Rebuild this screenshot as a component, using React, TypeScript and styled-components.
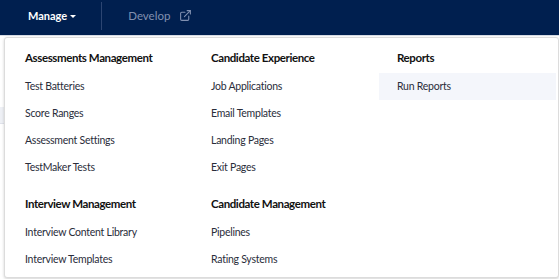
import React from "react";
import styled, { createGlobalStyle } from "styled-components";
import { ExternalLink } from "lucide-react";

const GlobalStyle = createGlobalStyle`
  html, body {
    margin: 0;
    padding: 0;
    background: #ffffff;
    font-family: Lato, "Open Sans", Arial, sans-serif;
  }
`;

const Page = styled.div`
  position: relative;
  width: 559px;
  height: 279px;
  overflow: hidden;
  background: #ffffff;
`;

const NavBar = styled.nav`
  display: flex;
  align-items: center;
  height: 35px;
  padding-left: 28px;
  background: #001f4f;
  border-bottom: 1px solid #d6dbe4;
`;

const NavLink = styled.div<{ active?: boolean }>`
  display: flex;
  align-items: center;
  gap: ${({ active }) => (active ? "3px" : "9px")};
  height: 31px;
  margin-bottom: 4px;
  font-size: ${({ active }) => (active ? "11px" : "11.5px")};
  font-weight: ${({ active }) => (active ? 700 : 400)};
  color: ${({ active }) => (active ? "#ffffff" : "#8090b0")};
`;

const Caret = styled.span`
  width: 0;
  height: 0;
  border-left: 3px solid transparent;
  border-right: 3px solid transparent;
  border-top: 3px solid #ffffff;
  margin-top: 1px;
`;

const Divider = styled.div`
  width: 1px;
  height: 28px;
  margin: 2px 26px 0 25px;
  align-self: flex-start;
  background: #2c4572;
`;

const Content = styled.div`
  padding-top: 71px;
`;

const TableHeader = styled.div`
  height: 16px;
  background: #eef0f5;
  border-bottom: 1px solid #dfe2ea;
`;

const Dropdown = styled.div`
  position: absolute;
  top: 37px;
  left: 4px;
  width: 549px;
  height: 233px;
  padding: 1px 2px 5px;
  display: grid;
  grid-template-columns: 186px 186px 1fr;
  background: #ffffff;
  border: 1px solid #dcdcdc;
  border-radius: 3px;
  box-shadow: 0 1px 3px rgba(0, 0, 0, 0.18);
`;

const Column = styled.div`
  display: flex;
  flex-direction: column;
  gap: 4px;
`;

const Section = styled.div`
  display: flex;
  flex-direction: column;
`;

const Heading = styled.div`
  height: 20px;
  line-height: 20px;
  margin: 9px 0 5px;
  padding: 0 18px;
  font-size: 11.5px;
  font-weight: 700;
  letter-spacing: -0.4px;
  color: #111111;
`;

const Item = styled.div<{ hovered?: boolean }>`
  height: 27px;
  line-height: 27px;
  padding: 0 18px;
  font-size: 10.5px;
  letter-spacing: -0.25px;
  color: #2a2d3a;
  background: ${({ hovered }) => (hovered ? "#f4f6fb" : "transparent")};
`;

const menu = [
  [
    {
      title: "Assessments Management",
      items: ["Test Batteries", "Score Ranges", "Assessment Settings", "TestMaker Tests"],
    },
    {
      title: "Interview Management",
      items: ["Interview Content Library", "Interview Templates"],
    },
  ],
  [
    {
      title: "Candidate Experience",
      items: ["Job Applications", "Email Templates", "Landing Pages", "Exit Pages"],
    },
    {
      title: "Candidate Management",
      items: ["Pipelines", "Rating Systems"],
    },
  ],
  [
    {
      title: "Reports",
      items: ["Run Reports"],
    },
  ],
];

const App = () => {
  return (
    <Page>
      <GlobalStyle />
      <NavBar>
        <NavLink active>
          Manage
          <Caret />
        </NavLink>
        <Divider />
        <NavLink>
          Develop
          <ExternalLink size={13} strokeWidth={2} color="#8090b0" />
        </NavLink>
      </NavBar>

      <Content>
        <TableHeader />
      </Content>

      <Dropdown>
        {menu.map((column, ci) => (
          <Column key={ci}>
            {column.map((section) => (
              <Section key={section.title}>
                <Heading>{section.title}</Heading>
                {section.items.map((item) => (
                  <Item key={item} hovered={item === "Run Reports"}>
                    {item}
                  </Item>
                ))}
              </Section>
            ))}
          </Column>
        ))}
      </Dropdown>
    </Page>
  );
};

export default App;
